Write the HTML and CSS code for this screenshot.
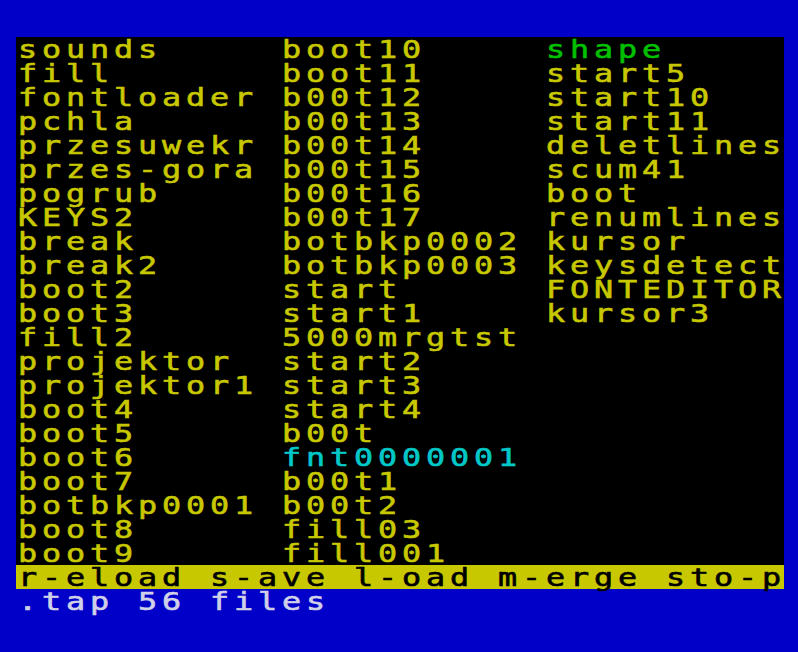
FILE: index.html
```html
<!DOCTYPE html>
<html lang="en">
<head>
    <meta charset="UTF-8">
    <title>Tape catalogue</title>
    <link rel="stylesheet" href="styles.css">
</head>
<body>
    <div class="screen">
        <div class="listing">
            <!-- column 1 -->
            <div class="col">
                <div class="line">sounds</div>
                <div class="line">fill</div>
                <div class="line">fontloader</div>
                <div class="line">pchla</div>
                <div class="line">przesuwekr</div>
                <div class="line">przes-gora</div>
                <div class="line">pogrub</div>
                <div class="line">KEYS2</div>
                <div class="line">break</div>
                <div class="line">break2</div>
                <div class="line">boot2</div>
                <div class="line">boot3</div>
                <div class="line">fill2</div>
                <div class="line">projektor</div>
                <div class="line">projektor1</div>
                <div class="line">boot4</div>
                <div class="line">boot5</div>
                <div class="line">boot6</div>
                <div class="line">boot7</div>
                <div class="line">botbkp0001</div>
                <div class="line">boot8</div>
                <div class="line">boot9</div>
            </div>
            <!-- column 2 -->
            <div class="col">
                <div class="line">boot10</div>
                <div class="line">boot11</div>
                <div class="line">b00t12</div>
                <div class="line">b00t13</div>
                <div class="line">b00t14</div>
                <div class="line">b00t15</div>
                <div class="line">b00t16</div>
                <div class="line">b00t17</div>
                <div class="line">botbkp0002</div>
                <div class="line">botbkp0003</div>
                <div class="line">start</div>
                <div class="line">start1</div>
                <div class="line">5000mrgtst</div>
                <div class="line">start2</div>
                <div class="line">start3</div>
                <div class="line">start4</div>
                <div class="line">b00t</div>
                <div class="line cyan">fnt0000001</div>
                <div class="line">b00t1</div>
                <div class="line">b00t2</div>
                <div class="line">fill03</div>
                <div class="line">fill001</div>
            </div>
            <!-- column 3 -->
            <div class="col">
                <div class="line green">shape</div>
                <div class="line">start5</div>
                <div class="line">start10</div>
                <div class="line">start11</div>
                <div class="line">deletlines</div>
                <div class="line">scum41</div>
                <div class="line">boot</div>
                <div class="line">renumlines</div>
                <div class="line">kursor</div>
                <div class="line">keysdetect</div>
                <div class="line">FONTEDITOR</div>
                <div class="line">kursor3</div>
            </div>
        </div>
        <div class="menu"><div class="line">r-eload s-ave l-oad m-erge sto-p</div></div>
        <div class="line status">.tap 56 files</div>
    </div>
</body>
</html>
```

FILE: styles.css
```css
:root {
    --blue: #0000c8;
    --yellow: #c8c800;
    --green: #00c000;
    --cyan: #00c8c8;
    --white: #d0d0e8;
    --cell: 24px;
    /* glyphs are stretched to fill the 24px character cell */
    --sx: 1.55;
    --sy: 1.25;
}
body {
    margin: 0;
    padding: 37px 0 0 16px;
    background: var(--blue);
    height: 652px;
    box-sizing: border-box;
    overflow: hidden;
}
.screen {
    width: 768px;
    font-family: "DejaVu Sans Mono", "Liberation Mono", monospace;
    font-size: 20.5px;
    line-height: var(--cell);
    letter-spacing: calc(var(--cell) / var(--sx) - 1ch);
    -webkit-text-stroke: 0.5px currentColor;
}
.listing {
    display: grid;
    grid-template-columns: 264px 264px 240px;
    height: 528px;
    background: #000;
    color: var(--yellow);
}
.line {
    width: max-content;
    height: var(--cell);
    padding-left: 1.3px;
    white-space: pre;
    transform: scale(var(--sx), var(--sy));
    transform-origin: 0 11.5px;
}
.green {
    color: var(--green);
}
.cyan {
    color: var(--cyan);
}
.menu {
    height: var(--cell);
    background: var(--yellow);
    color: #000;
}
.status {
    color: var(--white);
}
```
